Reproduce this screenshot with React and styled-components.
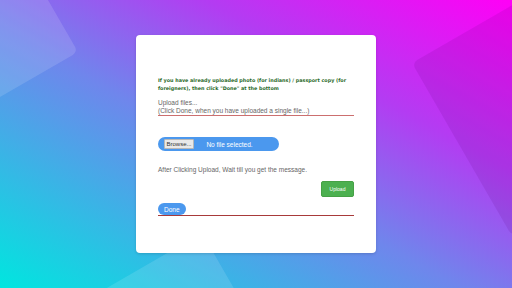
import React from 'react'
import styled, { createGlobalStyle } from 'styled-components';

const GlobalStyle = createGlobalStyle`
  html, body {
    margin: 0;
    padding: 0;
    height: 100%;
  }
  #root {
    height: 100%;
  }
`;

const Page = styled.div`
  position: relative;
  height: 288px;
  overflow: hidden;
  display: flex;
  align-items: center;
  justify-content: center;
  background: linear-gradient(to top right, #00e6df 0%, #6f86ec 45%, #b33cf2 70%, #ff00f6 100%);
  font-family: "Liberation Sans", Arial, sans-serif;
`;

const Shape = styled.div`
  position: absolute;
  width: ${(p) => p.size}px;
  height: ${(p) => p.size}px;
  left: ${(p) => p.left}px;
  top: ${(p) => p.top}px;
  border-radius: 6px;
  background: ${(p) => p.tint};
  transform-origin: ${(p) => p.origin};
  transform: rotate(-30deg);
`;

const Card = styled.div`
  position: relative;
  z-index: 1;
  width: 240px;
  height: 218px;
  box-sizing: border-box;
  padding: 42px 22px 0;
  background: #fff;
  border-radius: 4px;
  box-shadow: 0 1px 3px rgba(0, 0, 0, 0.15);
  display: flex;
  flex-direction: column;
`;

const Notice = styled.p`
  margin: 0;
  font-family: "DejaVu Sans", Verdana, sans-serif;
  font-weight: bold;
  font-size: 4.85px;
  line-height: 7.5px;
  color: #2a6a2a;
`;

const UploadLabel = styled.div`
  margin-top: 7px;
  font-size: 6.5px;
  line-height: 8px;
  color: #666;
  border-bottom: 1px solid #cc6f6f;
`;

const FilePill = styled.div`
  margin-top: 21px;
  width: 121px;
  height: 14px;
  box-sizing: border-box;
  padding: 0 6px;
  border-radius: 7px;
  background: #4b98ee;
  display: flex;
  align-items: center;
  font-size: 6.5px;
`;

const BrowseButton = styled.span`
  width: 30px;
  height: 10px;
  box-sizing: border-box;
  background: #e9e9e9;
  border: 1px solid #b8b8b8;
  border-radius: 1px;
  color: #333;
  display: flex;
  align-items: center;
  justify-content: center;
  font-size: 6px;
`;

const FileName = styled.span`
  flex: 1;
  text-align: center;
  color: #fff;
  padding-right: 8px;
`;

const Message = styled.p`
  margin: 15px 0 0;
  font-size: 6.5px;
  line-height: 8px;
  color: #666;
`;

const UploadRow = styled.div`
  margin-top: 7px;
  display: flex;
  justify-content: flex-end;
`;

const UploadButton = styled.button`
  width: 33px;
  height: 16px;
  padding: 0;
  border: 1px solid #46a146;
  border-radius: 2px;
  background: #4cb050;
  color: #fff;
  font-family: "Liberation Sans", Arial, sans-serif;
  font-size: 5px;
`;

const DoneRow = styled.div`
  margin-top: 6px;
  border-bottom: 1px solid #a83a3a;
  display: flex;
`;

const DoneButton = styled.button`
  height: 12px;
  padding: 0 6px;
  border: none;
  border-radius: 6px;
  background: #4b98ee;
  color: #fff;
  font-family: "Liberation Sans", Arial, sans-serif;
  font-size: 6.5px;
`;

const App = () => {
  return (
    <Page>
      <GlobalStyle />
      <Shape size={200} left={-122} top={-148} origin="bottom right" tint="rgba(255,255,255,0.13)" />
      <Shape size={200} left={412} top={63} origin="top left" tint="rgba(90,0,120,0.12)" />
      <Shape size={200} left={2} top={233} origin="top right" tint="rgba(255,255,255,0.12)" />
      <Card>
        <Notice>
          If you have already uploaded photo (for indians) / passport copy (for
          foreigners), then click "Done" at the bottom
        </Notice>
        <UploadLabel>
          Upload files...
          <br />
          (Click Done, when you have uploaded a single file...)
        </UploadLabel>
        <FilePill>
          <BrowseButton>Browse...</BrowseButton>
          <FileName>No file selected.</FileName>
        </FilePill>
        <Message>After Clicking Upload, Wait till you get the message.</Message>
        <UploadRow>
          <UploadButton>Upload</UploadButton>
        </UploadRow>
        <DoneRow>
          <DoneButton>Done</DoneButton>
        </DoneRow>
      </Card>
    </Page>
  )
}

export default App
